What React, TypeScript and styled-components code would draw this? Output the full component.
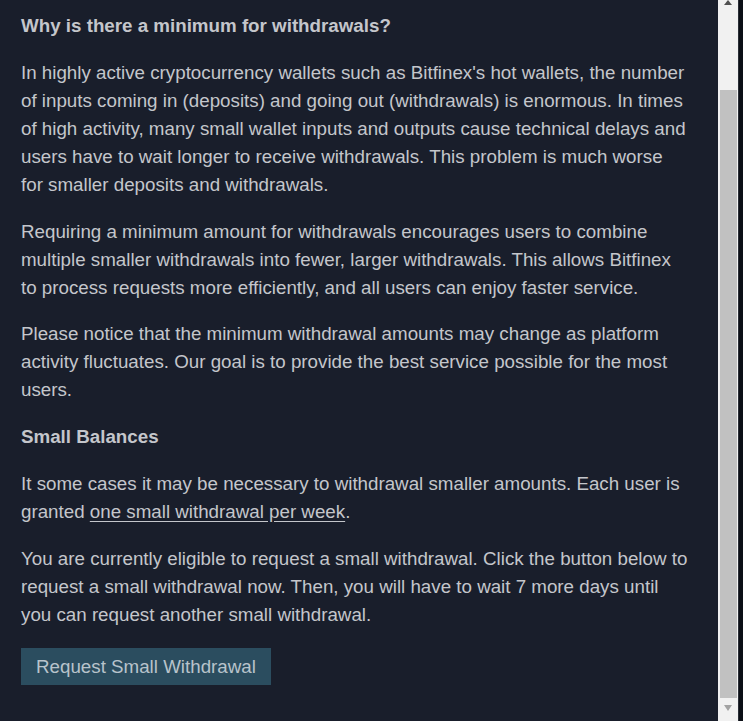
import styled, { createGlobalStyle } from "styled-components";

const GlobalStyle = createGlobalStyle`
  html, body {
    margin: 0;
    padding: 0;
    background: #191e2b;
    overflow: hidden;
  }
`;

const Page = styled.div`
  display: flex;
  height: 721px;
  background: #191e2b;
  font-family: "Liberation Sans", Arial, sans-serif;
  font-size: 18.75px;
  color: #c4c6cb;
`;

const Content = styled.div`
  flex: 1;
  padding: 12px 30px 0 21px;
  overflow: hidden;
`;

const Heading = styled.h3`
  margin: 0 0 18.75px;
  font-size: 18.75px;
  line-height: 28px;
  font-weight: bold;
`;

const Paragraph = styled.p`
  margin: 0 0 18.75px;
  font-size: 18.75px;
  line-height: 28px;
`;

const Link = styled.a`
  color: inherit;
  text-decoration: underline;
  text-underline-offset: 3px;
  cursor: pointer;
`;

const ButtonRow = styled.div`
  padding-top: 1px;
`;

const Button = styled.button`
  height: 37px;
  padding: 0 15px;
  border: none;
  background: #2b4d5f;
  color: #b8c3cb;
  font-family: inherit;
  font-size: 18.75px;
  cursor: pointer;
`;

const ScrollTrack = styled.div`
  width: 20px;
  background: #f1f1f1;
  display: flex;
  flex-direction: column;
  align-items: center;
`;

const Arrow = styled.div<{ $dir: "up" | "down" }>`
  width: 0;
  height: 0;
  border-left: 4.5px solid transparent;
  border-right: 4.5px solid transparent;
  ${(p) =>
    p.$dir === "up"
      ? "border-bottom: 5px solid #505050; margin-bottom: 1px;"
      : "border-top: 6px solid #a3a3a3; margin-top: 7px;"}
`;

const Thumb = styled.div<{ $top: number; $height: number }>`
  width: 17px;
  margin-left: 1px;
  margin-top: ${(p) => p.$top}px;
  height: ${(p) => p.$height}px;
  background: #c1c1c1;
`;

const Edge = styled.div`
  width: 4px;
  border-left: 1px solid #2a2e36;
  background: #0b0e15;
`;

export default function App() {
  return (
    <>
      <GlobalStyle />
      <Page>
        <Content>
          <Heading>Why is there a minimum for withdrawals?</Heading>
          <Paragraph>
            In highly active cryptocurrency wallets such as Bitfinex's hot
            wallets, the number of inputs coming in (deposits) and going out
            (withdrawals) is enormous. In times of high activity, many small
            wallet inputs and outputs cause technical delays and users have to
            wait longer to receive withdrawals. This problem is much worse for
            smaller deposits and withdrawals.
          </Paragraph>
          <Paragraph>
            Requiring a minimum amount for withdrawals encourages users to
            combine multiple smaller withdrawals into fewer, larger
            withdrawals. This allows Bitfinex to process requests more
            efficiently, and all users can enjoy faster service.
          </Paragraph>
          <Paragraph>
            Please notice that the minimum withdrawal amounts may change as
            platform activity fluctuates. Our goal is to provide the best
            service possible for the most users.
          </Paragraph>
          <Heading>Small Balances</Heading>
          <Paragraph>
            It some cases it may be necessary to withdrawal smaller amounts.
            Each user is granted <Link>one small withdrawal per week</Link>.
          </Paragraph>
          <Paragraph>
            You are currently eligible to request a small withdrawal. Click the
            button below to request a small withdrawal now. Then, you will have
            to wait 7 more days until you can request another small withdrawal.
          </Paragraph>
          <ButtonRow>
            <Button>Request Small Withdrawal</Button>
          </ButtonRow>
        </Content>
        <ScrollTrack>
          <Arrow $dir="up" />
          <Thumb $top={84} $height={608} />
          <Arrow $dir="down" />
        </ScrollTrack>
        <Edge />
      </Page>
    </>
  );
}
